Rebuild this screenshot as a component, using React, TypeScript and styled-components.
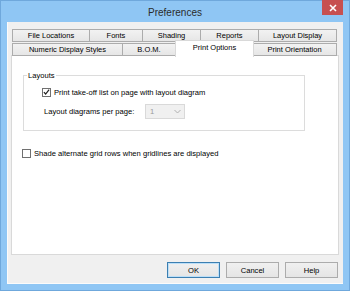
import * as React from "react";
import styled, { createGlobalStyle } from "styled-components";

const GlobalStyle = createGlobalStyle`
  html, body {
    margin: 0;
    padding: 0;
    background: #8fc6f4;
  }
  body {
    font-family: "Liberation Sans", Arial, sans-serif;
  }
`;

const Window = styled.div`
  width: 350px;
  height: 291px;
  background: #8fc6f4;
  display: flex;
  flex-direction: column;
  box-sizing: border-box;
  border: 1px solid #6fa8dc;
`;

const TitleBar = styled.div`
  height: 20px;
  position: relative;
  display: flex;
  align-items: center;
  justify-content: center;
  font-size: 10px;
  color: #2b2b2b;
  padding-top: 1px;
`;

const CloseButton = styled.div`
  position: absolute;
  right: 6px;
  top: -1px;
  width: 21px;
  height: 15px;
  background: #c75050;
  display: flex;
  align-items: center;
  justify-content: center;
`;

const Client = styled.div`
  flex: 1;
  margin: 0 6px 6px 6px;
  background: #f0f0f0;
  border-left: 1px solid #fbfbfb;
  border-bottom: 1px solid #fbfbfb;
  display: flex;
  flex-direction: column;
  padding: 7px 4px 0 3px;
`;

const TabRow = styled.div<{ $front?: boolean }>`
  display: flex;
  margin: 0 1px;
  height: ${p => (p.$front ? 14 : 13)}px;
  align-items: flex-end;
  position: relative;
  z-index: ${p => (p.$front ? 2 : 1)};
`;

const Tab = styled.div<{ $w: number; $active?: boolean }>`
  width: ${p => p.$w}px;
  box-sizing: border-box;
  height: ${p => (p.$active ? 17 : 13)}px;
  margin: ${p => (p.$active ? "0 -1px -1px" : "0")};
  padding-bottom: ${p => (p.$active ? 4 : 0)}px;
  position: relative;
  z-index: ${p => (p.$active ? 3 : 1)};
  background: ${p =>
    p.$active ? "#ffffff" : "linear-gradient(#f2f2f2, #e6e6e6)"};
  border: 1px solid ${p => (p.$active ? "#d9d9d9" : "#acacac")};
  border-bottom: ${p => (p.$active ? "none" : "1px solid #acacac")};
  margin-left: -1px;
  &:first-child {
    margin-left: 0;
  }
  display: flex;
  align-items: center;
  justify-content: center;
  font-size: 7.5px;
  color: #000;
  white-space: nowrap;
`;

const Panel = styled.div`
  height: 200px;
  box-sizing: border-box;
  background: #ffffff;
  border: 1px solid #d9d9d9;
  margin-top: -1px;
  position: relative;
  z-index: 1;
  padding: 15px 10px 0 10px;
  display: flex;
  flex-direction: column;
`;

const GroupBox = styled.fieldset`
  margin: 0 0 0 1px;
  width: 282px;
  height: 60px;
  box-sizing: border-box;
  border: 1px solid #dcdcdc;
  padding: 0;
  & legend {
    font-size: 7.6px;
    color: #000;
    padding: 0 1px;
    margin-left: 3px;
    line-height: 9px;
  }
`;

const GroupBody = styled.div`
  display: flex;
  flex-direction: column;
  gap: 7px;
  padding: 7px 0 0 18px;
`;

const CheckRow = styled.label<{ $top?: number }>`
  display: flex;
  align-items: center;
  gap: 3px;
  font-size: 7.6px;
  color: #000;
  margin-top: ${p => p.$top ?? 0}px;
  height: 10px;
`;

const Box = styled.span`
  width: 9px;
  height: 9px;
  box-sizing: border-box;
  border: 1px solid #707070;
  background: #fff;
  display: flex;
  align-items: center;
  justify-content: center;
`;

const ComboRow = styled.div`
  display: flex;
  align-items: center;
  font-size: 7.6px;
  color: #000;
  padding-left: 2px;
`;

const ComboLabel = styled.span`
  width: 101px;
`;

const Combo = styled.div`
  width: 40px;
  height: 15px;
  box-sizing: border-box;
  border: 1px solid #d9d9d9;
  background: #f0f0f0;
  display: flex;
  align-items: center;
  justify-content: space-between;
  padding: 0 3px 0 4px;
  color: #9a9a9a;
`;

const ButtonRow = styled.div`
  display: flex;
  justify-content: flex-end;
  gap: 6px;
  padding: 7px 1px 0 0;
`;

const Button = styled.div<{ $default?: boolean }>`
  width: 53px;
  height: 16px;
  box-sizing: border-box;
  border: 1px solid ${p => (p.$default ? "#3c7fb1" : "#acacac")};
  box-shadow: ${p => (p.$default ? "inset 0 0 0 1px #bcdff8" : "none")};
  background: linear-gradient(#f0f0f0, #e5e5e5);
  display: flex;
  align-items: center;
  justify-content: center;
  font-size: 7.6px;
  color: #000;
`;

const Check = () => (
  <svg width="8" height="8" viewBox="0 0 8 8">
    <path d="M1 4.2 L3 6.3 L7 1.2" fill="none" stroke="#222" strokeWidth="1.4" />
  </svg>
);

const topTabs = [
  { label: "File Locations", w: 78 },
  { label: "Fonts", w: 54 },
  { label: "Shading", w: 59 },
  { label: "Reports", w: 59 },
  { label: "Layout Display", w: 79 }
];

const frontTabs = [
  { label: "Numeric Display Styles", w: 111 },
  { label: "B.O.M.", w: 54 },
  { label: "Print Options", w: 79, active: true },
  { label: "Print Orientation", w: 85 }
];

export default function App() {
  return (
    <>
      <GlobalStyle />
      <Window>
        <TitleBar>
          Preferences
          <CloseButton>
            <svg width="8" height="8" viewBox="0 0 8 8">
              <path d="M1 1 L7 7 M7 1 L1 7" stroke="#fff" strokeWidth="1.6" />
            </svg>
          </CloseButton>
        </TitleBar>
        <Client>
          <TabRow>
            {topTabs.map(t => (
              <Tab key={t.label} $w={t.w}>
                {t.label}
              </Tab>
            ))}
          </TabRow>
          <TabRow $front>
            {frontTabs.map(t => (
              <Tab key={t.label} $w={t.w} $active={t.active}>
                {t.label}
              </Tab>
            ))}
          </TabRow>
          <Panel>
            <GroupBox>
              <legend>Layouts</legend>
              <GroupBody>
                <CheckRow>
                  <Box>
                    <Check />
                  </Box>
                  Print take-off list on page with layout diagram
                </CheckRow>
                <ComboRow>
                  <ComboLabel>Layout diagrams per page:</ComboLabel>
                  <Combo>
                    1
                    <svg width="7" height="5" viewBox="0 0 7 5">
                      <path d="M0.5 1 L3.5 4 L6.5 1" fill="none" stroke="#b0b0b0" strokeWidth="1" />
                    </svg>
                  </Combo>
                </ComboRow>
              </GroupBody>
            </GroupBox>
            <CheckRow $top={17}>
              <Box />
              Shade alternate grid rows when gridlines are displayed
            </CheckRow>
          </Panel>
          <ButtonRow>
            <Button $default>OK</Button>
            <Button>Cancel</Button>
            <Button>Help</Button>
          </ButtonRow>
        </Client>
      </Window>
    </>
  );
}
